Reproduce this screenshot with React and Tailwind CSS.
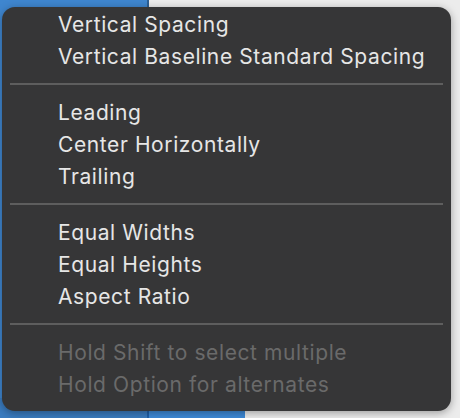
import React from "react";

const Item = ({ children, disabled }) => (
  <div
    className={`h-[32px] shrink-0 flex items-center pl-[56px] text-[21px] tracking-[0.6px] leading-none ${
      disabled ? "text-[#6a6a6a]" : "text-[#e6e6e6]"
    }`}
  >
    {children}
  </div>
);

const Sep = () => (
  <div className="h-[24px] shrink-0 flex items-center px-[8px]">
    <div className="h-[2px] w-full bg-[#5e5e5e]" />
  </div>
);

export default function App() {
  return (
    <div
      className="relative w-[460px] h-[418px] overflow-hidden flex flex-col"
      style={{ fontFamily: "Inter, 'Noto Sans', sans-serif" }}
    >
      <div className="flex flex-1">
        <div className="w-[147px] shrink-0 bg-[#3f86cf]" />
        <div className="w-[2px] shrink-0 bg-[#2d5f93]" />
        <div className="flex-1 bg-[#ececec]" />
      </div>
      <div className="flex h-[20px] shrink-0">
        <div className="w-[147px] shrink-0 bg-[#3a7cc0]" />
        <div className="w-[2px] shrink-0 bg-[#1f5fa8]" />
        <div className="w-[96px] shrink-0 bg-[#3d8ad8]" />
        <div className="flex-1 bg-[#ececec]" />
      </div>

      <div className="absolute left-[2px] top-[7px] w-[449px] h-[404px] rounded-[13px] bg-[#363637] shadow-[0_2px_8px_rgba(0,0,0,0.35)] flex flex-col pt-[1px]">
        <Item>Vertical Spacing</Item>
        <Item>Vertical Baseline Standard Spacing</Item>
        <Sep />
        <Item>Leading</Item>
        <Item>Center Horizontally</Item>
        <Item>Trailing</Item>
        <Sep />
        <Item>Equal Widths</Item>
        <Item>Equal Heights</Item>
        <Item>Aspect Ratio</Item>
        <Sep />
        <Item disabled>Hold Shift to select multiple</Item>
        <Item disabled>Hold Option for alternates</Item>
      </div>
    </div>
  );
}
